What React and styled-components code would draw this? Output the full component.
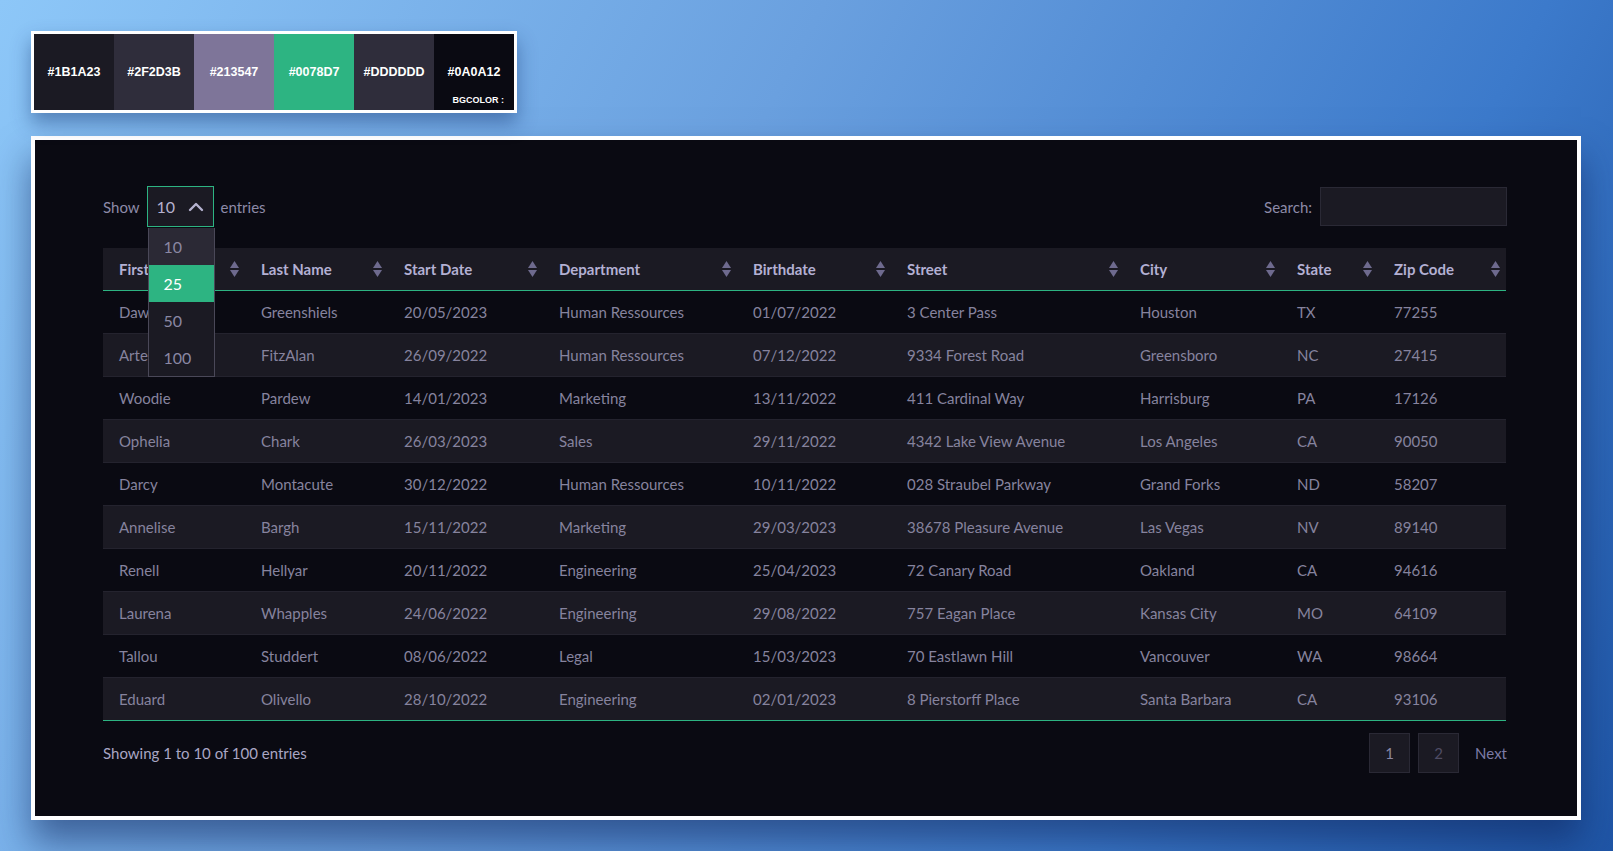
import React from 'react';
import styled, { createGlobalStyle } from 'styled-components';

const GlobalStyle = createGlobalStyle`
    body {
        margin : 0;
        background : #ffffff;
        font-family : "Lato", "Noto Sans", sans-serif;
    }
`

const Page = styled('div')`
    box-sizing : border-box;
    height : 851px;
    padding : 31px 32px 0 31px;
    background : linear-gradient(118deg, #8dc7f8 0%, #6aa0df 40%, #3c7acb 75%, #1f55a5 100%);
    box-shadow : 0 8px 24px rgba(0, 0, 0, 0.07);
`

const Palette = styled('div')`
    display : inline-flex;
    border : 3px solid #ffffff;
    box-shadow : 0 10px 18px rgba(20, 50, 110, 0.45);
`

const Swatch = styled('div')`
    position : relative;
    width : 80px;
    height : 76px;
    display : flex;
    align-items : center;
    justify-content : center;
    background : ${props => props.color};
    color : #ffffff;
    font-family : "Liberation Sans", Arial, sans-serif;
    font-weight : 700;
    font-size : 12.5px;
`

const SwatchNote = styled('span')`
    position : absolute;
    right : 10px;
    bottom : 5px;
    font-size : 9px;
`

const Card = styled('div')`
    margin-top : 23px;
    border : 4px solid #ffffff;
    background : #0a0a12;
    padding : 46px 70px 43px 68px;
    box-shadow : 0 22px 34px rgba(12, 35, 90, 0.55);
`

const TopBar = styled('div')`
    display : flex;
    justify-content : space-between;
    align-items : center;
    height : 41px;
    margin-bottom : 21px;
    color : #8d8aa8;
    font-size : 15px;
`

const Length = styled('div')`
    display : flex;
    align-items : center;
    gap : 7px;
`

const SelectWrap = styled('div')`
    position : relative;
`

const Select = styled('div')`
    box-sizing : border-box;
    width : 67px;
    height : 41px;
    display : flex;
    align-items : center;
    justify-content : space-between;
    padding : 0 9px 0 9px;
    background : #1b1a23;
    border : 1px solid #2db482;
    color : #b5b2cf;
    font-size : 16px;
`

const Dropdown = styled('div')`
    position : absolute;
    top : 42px;
    left : 1px;
    width : 65px;
    background : #1b1a23;
    border : 1px solid #4a4858;
    border-top : none;
    z-index : 5;
`

const Option = styled('div')`
    height : 37px;
    display : flex;
    align-items : center;
    padding-left : 15px;
    font-size : 16px;
    background : ${props => props.active ? '#2db482' : props.hover ? '#2b2935' : '#1b1a23'};
    color : ${props => props.active ? '#ffffff' : '#8a87a3'};
`

const Search = styled('label')`
    display : flex;
    align-items : center;
    gap : 8px;
`

const SearchInput = styled('div')`
    box-sizing : border-box;
    width : 187px;
    height : 39px;
    background : #1b1a23;
    border : 1px solid #2a2935;
`

const Table = styled('table')`
    width : 1403px;
    border-collapse : collapse;
    table-layout : fixed;
    font-size : 15px;
    border-bottom : 1px solid #2db482;
`

const HeadCell = styled('th')`
    position : relative;
    height : 42px;
    padding : 0 0 0 16px;
    text-align : left;
    background : #1b1a23;
    color : #b3b0d3;
    font-weight : 700;
    border-bottom : 1px solid #2db482;
`

const SortIcon = styled('span')`
    position : absolute;
    right : 6px;
    top : 50%;
    transform : translateY(-50%);
    display : flex;
    flex-direction : column;
    gap : 2px;
`

const Row = styled('tr')`
    height : 43px;
    background : ${props => props.odd ? '#1b1a23' : '#0a0a12'};
    border-top : 1px solid #24232e;
`

const Cell = styled('td')`
    height : 42px;
    padding : 0 0 0 16px;
    color : #86839e;
    white-space : nowrap;
    overflow : hidden;
`

const Footer = styled('div')`
    display : flex;
    justify-content : space-between;
    align-items : center;
    margin-top : 12px;
    height : 40px;
    color : #a9a6c4;
    font-size : 15px;
`

const Pager = styled('div')`
    display : flex;
    align-items : center;
    gap : 8px;
`

const PageButton = styled('div')`
    box-sizing : border-box;
    width : 41px;
    height : 40px;
    display : flex;
    align-items : center;
    justify-content : center;
    background : #1b1a23;
    border : 1px solid #2a2935;
    color : ${props => props.current ? '#8a87a3' : '#4f4c63'};
`

const Next = styled('span')`
    margin-left : 8px;
    color : #7c7aa6;
`

const swatches = [
    ['#1b1a23', '#1B1A23'],
    ['#2f2d3b', '#2F2D3B'],
    ['#7e7599', '#213547'],
    ['#2db482', '#0078D7'],
    ['#2f2d3b', '#DDDDDD'],
    ['#0a0a12', '#0A0A12'],
]

const columns = [
    ['First Name', 142], ['Last Name', 143], ['Start Date', 155], ['Department', 194],
    ['Birthdate', 154], ['Street', 233], ['City', 157], ['State', 97], ['Zip Code', 128],
]

const rows = [
    ['Dawn', 'Greenshiels', '20/05/2023', 'Human Ressources', '01/07/2022', '3 Center Pass', 'Houston', 'TX', '77255'],
    ['Artemis', 'FitzAlan', '26/09/2022', 'Human Ressources', '07/12/2022', '9334 Forest Road', 'Greensboro', 'NC', '27415'],
    ['Woodie', 'Pardew', '14/01/2023', 'Marketing', '13/11/2022', '411 Cardinal Way', 'Harrisburg', 'PA', '17126'],
    ['Ophelia', 'Chark', '26/03/2023', 'Sales', '29/11/2022', '4342 Lake View Avenue', 'Los Angeles', 'CA', '90050'],
    ['Darcy', 'Montacute', '30/12/2022', 'Human Ressources', '10/11/2022', '028 Straubel Parkway', 'Grand Forks', 'ND', '58207'],
    ['Annelise', 'Bargh', '15/11/2022', 'Marketing', '29/03/2023', '38678 Pleasure Avenue', 'Las Vegas', 'NV', '89140'],
    ['Renell', 'Hellyar', '20/11/2022', 'Engineering', '25/04/2023', '72 Canary Road', 'Oakland', 'CA', '94616'],
    ['Laurena', 'Whapples', '24/06/2022', 'Engineering', '29/08/2022', '757 Eagan Place', 'Kansas City', 'MO', '64109'],
    ['Tallou', 'Studdert', '08/06/2022', 'Legal', '15/03/2023', '70 Eastlawn Hill', 'Vancouver', 'WA', '98664'],
    ['Eduard', 'Olivello', '28/10/2022', 'Engineering', '02/01/2023', '8 Pierstorff Place', 'Santa Barbara', 'CA', '93106'],
]

const Sort = () => (
    <SortIcon>
        <svg width="9" height="7" viewBox="0 0 9 7"><path d="M4.5 0 L9 7 L0 7 Z" fill="#6e6a8e" /></svg>
        <svg width="9" height="7" viewBox="0 0 9 7"><path d="M0 0 L9 0 L4.5 7 Z" fill="#6e6a8e" /></svg>
    </SortIcon>
)

class App extends React.Component{
    render(){
        return(
            <Page>
                <GlobalStyle />
                <Palette>
                    {swatches.map(([color, label], i) => (
                        <Swatch key={i} color={color}>
                            {label}
                            {i === 5 && <SwatchNote>BGCOLOR :</SwatchNote>}
                        </Swatch>
                    ))}
                </Palette>
                <Card>
                    <TopBar>
                        <Length>
                            Show
                            <SelectWrap>
                                <Select>
                                    10
                                    <svg width="16" height="10" viewBox="0 0 16 10">
                                        <path d="M2 8 L8 2 L14 8" fill="none" stroke="#b5b2cf" strokeWidth="2.4" strokeLinecap="round" strokeLinejoin="round" />
                                    </svg>
                                </Select>
                                <Dropdown>
                                    <Option hover>10</Option>
                                    <Option active>25</Option>
                                    <Option>50</Option>
                                    <Option>100</Option>
                                </Dropdown>
                            </SelectWrap>
                            entries
                        </Length>
                        <Search>
                            Search:
                            <SearchInput />
                        </Search>
                    </TopBar>
                    <Table>
                        <colgroup>
                            {columns.map(([name, w]) => <col key={name} style={{ width : w }} />)}
                        </colgroup>
                        <thead>
                            <tr>
                                {columns.map(([name]) => (
                                    <HeadCell key={name}>{name}<Sort /></HeadCell>
                                ))}
                            </tr>
                        </thead>
                        <tbody>
                            {rows.map((row, i) => (
                                <Row key={i} odd={i % 2 === 1}>
                                    {row.map((value, j) => <Cell key={j}>{value}</Cell>)}
                                </Row>
                            ))}
                        </tbody>
                    </Table>
                    <Footer>
                        Showing 1 to 10 of 100 entries
                        <Pager>
                            <PageButton current>1</PageButton>
                            <PageButton>2</PageButton>
                            <Next>Next</Next>
                        </Pager>
                    </Footer>
                </Card>
            </Page>
        )
    }
}

export default App
